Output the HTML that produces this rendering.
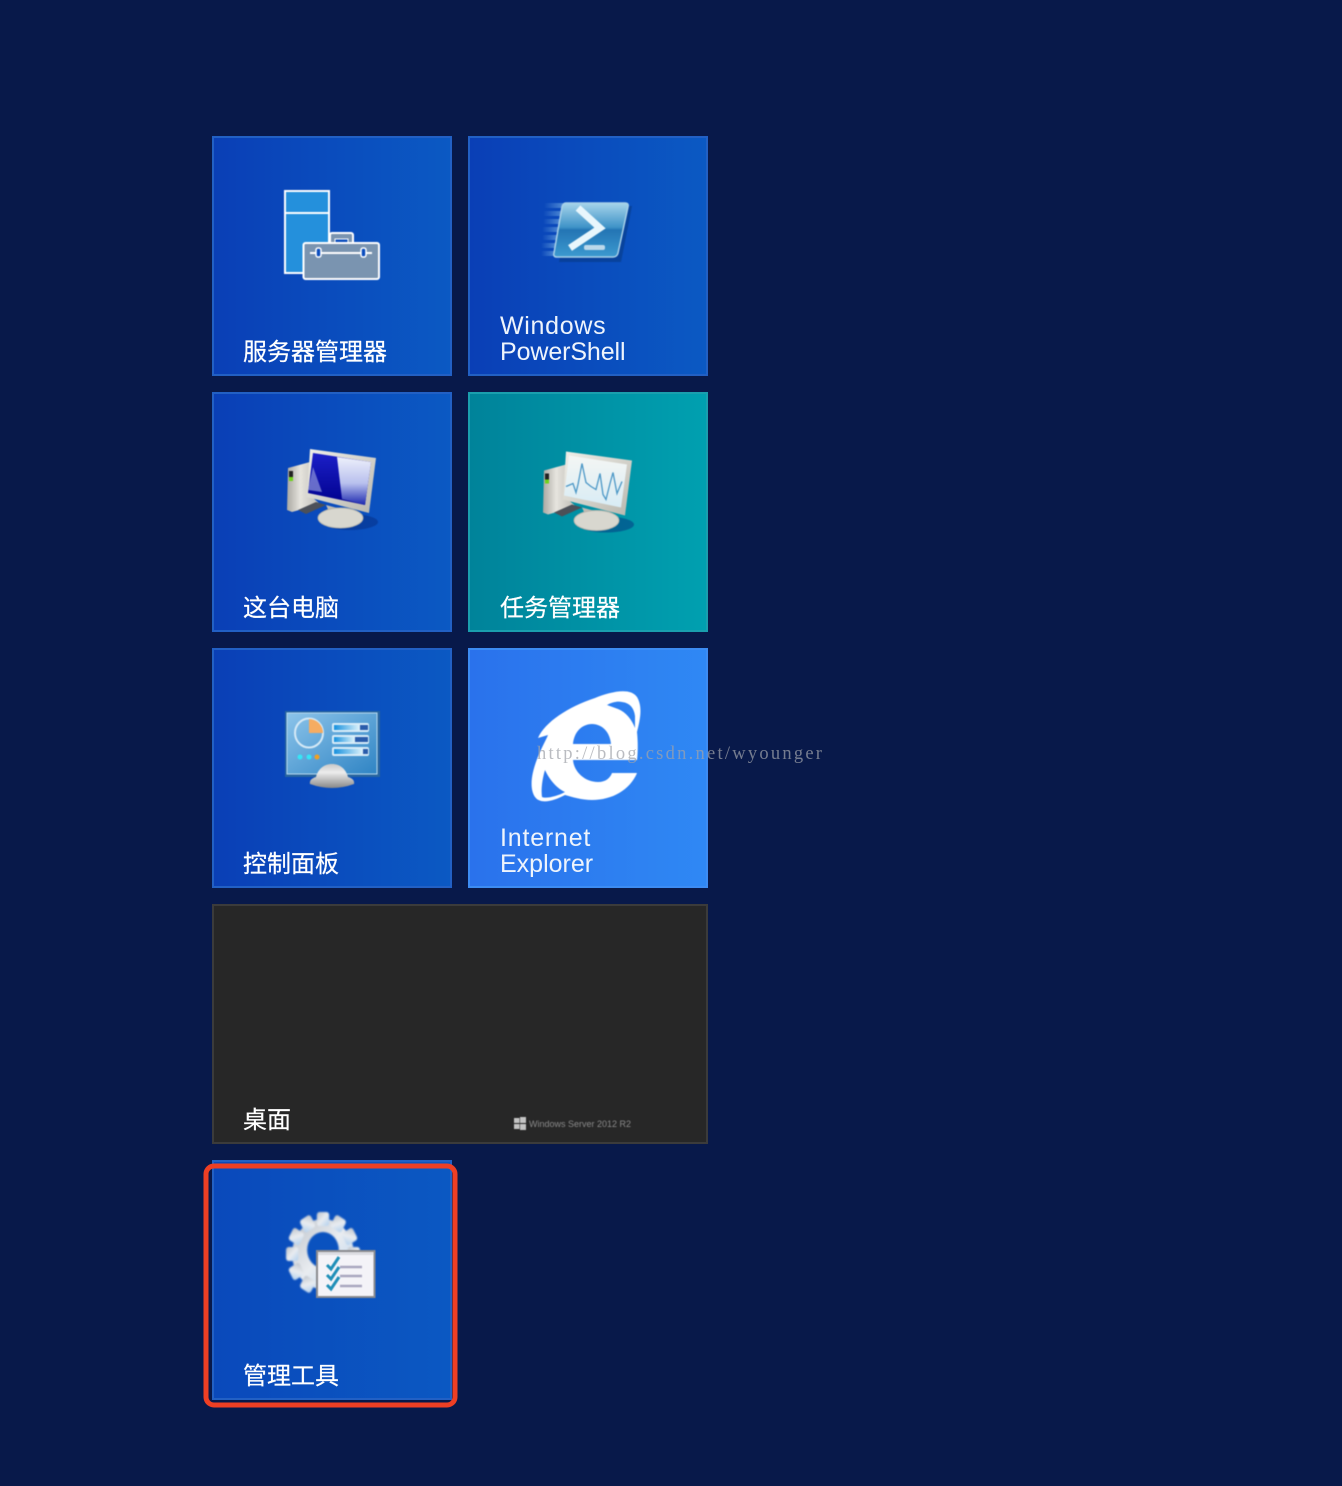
<!DOCTYPE html>
<html>
<head>
<meta charset="utf-8">
<style>
html,body{margin:0;padding:0;background:#08194a;width:1342px;height:1486px;overflow:hidden}
.t{position:absolute;box-sizing:border-box;border:2px solid;width:240px;height:240px}
.b{background:linear-gradient(90deg,#0a3fb6 0%,#0a4cbd 50%,#0b59c3 100%);border-color:#2260c4}
.l{position:absolute;color:#fff;font:24px/26px "Liberation Sans","Noto Sans CJK SC",sans-serif;white-space:nowrap;filter:blur(.35px);-webkit-text-stroke:.2px #fff}
.e{font-size:25px;color:#eef4fc;-webkit-text-stroke:0}
svg{position:absolute;left:0;top:0}
.i{filter:blur(.6px)}
</style>
</head>
<body>
<div class="t b" style="left:212px;top:136px"></div>
<div class="t b" style="left:468px;top:136px"></div>
<div class="t b" style="left:212px;top:392px"></div>
<div class="t" style="left:468px;top:392px;background:linear-gradient(90deg,#00839a,#00a0b0);border-color:#1a9fae"></div>
<div class="t b" style="left:212px;top:648px"></div>
<div class="t" style="left:468px;top:648px;background:linear-gradient(90deg,#2a72ec,#2f88f4);border-color:#3d8cf2"></div>
<div class="t" style="left:212px;top:904px;width:496px;background:#272727;border-color:#3b3b3b"></div>
<div class="t" style="left:212px;top:1160px;background:linear-gradient(90deg,#0a49bb,#0b58c2);border-color:#2260c4"></div>

<svg class="i" width="1342" height="1486" viewBox="0 0 1342 1486">
<defs>
<linearGradient id="ps" x1="0" y1="0" x2="0" y2="1"><stop offset="0" stop-color="#a6d4ea"/><stop offset=".45" stop-color="#3f93c8"/><stop offset=".5" stop-color="#2475b4"/><stop offset="1" stop-color="#3c9ad0"/></linearGradient>
<linearGradient id="sp" x1="0" y1="0" x2="1" y2="0"><stop offset="0" stop-color="#6fa8e0" stop-opacity="0"/><stop offset="1" stop-color="#6fa8e0" stop-opacity=".65"/></linearGradient>
<linearGradient id="scr" x1="0" y1="0" x2="0" y2="1"><stop offset="0" stop-color="#1c20c8"/><stop offset="1" stop-color="#00008c"/></linearGradient>
<linearGradient id="gl" x1="0" y1="0" x2="0" y2="1"><stop offset="0" stop-color="#eef0fb"/><stop offset=".55" stop-color="#b8c0ee"/><stop offset="1" stop-color="#1c28b0"/></linearGradient>
<linearGradient id="mon" x1="0" y1="0" x2="1" y2="1"><stop offset="0" stop-color="#f0efe9"/><stop offset="1" stop-color="#b9b7ae"/></linearGradient>
<linearGradient id="tw" x1="0" y1="0" x2="1" y2="0"><stop offset="0" stop-color="#aaa8a2"/><stop offset=".4" stop-color="#e6e4de"/><stop offset="1" stop-color="#bdbbb4"/></linearGradient>
<linearGradient id="tg" x1="0" y1="0" x2="0" y2="1"><stop offset="0" stop-color="#f4f6f4"/><stop offset="1" stop-color="#d8ecf5"/></linearGradient>
<linearGradient id="pan" x1="0" y1="0" x2="1" y2="1"><stop offset="0" stop-color="#8cc4ea"/><stop offset="1" stop-color="#2f84c4"/></linearGradient>
<linearGradient id="dome" x1="0" y1="0" x2="0" y2="1"><stop offset="0" stop-color="#c8c8c8"/><stop offset=".35" stop-color="#ededed"/><stop offset="1" stop-color="#888"/></linearGradient>
<linearGradient id="gear" x1="0" y1="0" x2="1" y2="1"><stop offset="0" stop-color="#bcc2ca"/><stop offset=".5" stop-color="#e9ecf0"/><stop offset="1" stop-color="#b0cfee"/></linearGradient>
<linearGradient id="bar" x1="0" y1="0" x2="1" y2="0"><stop offset="0" stop-color="#1590de"/><stop offset="1" stop-color="#d8f0fa"/></linearGradient>
<g id="pc">
<ellipse cx="350" cy="522" rx="28" ry="8" fill="#04287a" opacity=".45"/>
<polygon points="288,468 310,462 312,497 320,504 292,512 287,510" fill="url(#tw)"/>
<rect x="289" y="471" width="4" height="7" fill="#222"/><rect x="289" y="477" width="4" height="4" fill="#6fd21c"/>
<polygon points="298,510 316,502 326,505 306,514" fill="#4c5058"/>
<polygon points="326,505 352,512 352,520 330,514" fill="#bdbbb4"/>
<ellipse cx="340.500" cy="518" rx="22.500" ry="10" fill="#d8d7cf" stroke="#b6b5ad"/>
<polygon points="310,449 376,458 369,513 307,497" fill="url(#mon)"/>
</g>
</defs>

<!-- server manager -->
<rect x="285" y="191" width="44" height="82" fill="#2490dc" stroke="#fff" stroke-width="2"/>
<line x1="285" y1="213" x2="329" y2="213" stroke="#fff" stroke-width="2"/>
<rect x="330" y="233" width="23" height="14" rx="2" fill="#7a94b0" stroke="#fff" stroke-width="2"/>
<rect x="335" y="239" width="13" height="5" fill="#0a4cbd" stroke="#fff"/>
<rect x="303.500" y="243" width="75.500" height="36" rx="2" fill="#7a94b0" stroke="#fff" stroke-width="2"/>
<line x1="310" y1="253" x2="372" y2="253" stroke="#fff" stroke-width="2"/>
<rect x="316" y="248" width="5" height="9" rx="2" fill="#0a4cbd" stroke="#fff" stroke-width="1.500"/>
<rect x="361" y="248" width="5" height="9" rx="2" fill="#0a4cbd" stroke="#fff" stroke-width="1.500"/>

<!-- powershell -->
<g fill="url(#sp)"><rect x="544" y="203" width="19" height="5"/><rect x="543" y="211" width="19" height="5"/><rect x="543" y="219" width="17" height="5"/><rect x="542" y="227" width="17" height="5"/><rect x="542" y="235" width="16" height="5"/><rect x="541" y="243" width="15" height="5"/><rect x="541" y="251" width="14" height="5"/></g>
<polygon points="570,206 632,206 621,262 559,262" fill="#063a86" opacity=".6"/>
<path d="M566 203H625q4 0 3 4L618 253q-1 4-5 4H557q-4 0-3-4L562 207q1-4 4-4z" fill="url(#ps)" stroke="#a8d0e8" stroke-width="1.500"/>
<path d="M578 208L600 228L570 248" fill="none" stroke="#e8f6fc" stroke-width="7"/>
<rect x="584" y="245" width="21" height="5" rx="2" fill="#bcd8ea"/>

<!-- this pc -->
<use href="#pc"/>
<polygon points="313,453 371,462 365,505 308,493" fill="url(#scr)"/>
<polygon points="337,457 371,462 365,505 342,499" fill="url(#gl)"/>
<polygon points="313,467 322,492 308,490" fill="#8f96dc" opacity=".7"/>

<!-- task manager -->
<g transform="translate(256,2.500)"><use href="#pc"/>
<polygon points="313,453 371,462 365,505 308,493" fill="url(#tg)"/>
<path d="M310 484L317 481L320 490L322 482L326 461L330 480L335 484L340 487L344 471L347 492L350 497L354 481L357 470L361 491L366 479" fill="none" stroke="#4b97c6" stroke-width="1.300"/></g>

<!-- control panel -->
<rect x="285" y="711" width="95" height="66" fill="#29669f"/>
<rect x="287" y="713" width="90" height="61" fill="url(#pan)" stroke="#b6d8ee"/>
<ellipse cx="309" cy="733" rx="14" ry="14.500" fill="none" stroke="#d5e9f6" stroke-width="2"/>
<path d="M309 719A14 14 0 0 1 323 733H309Z" fill="#f5ac62"/>
<g fill="#d8ecf8"><rect x="332" y="723" width="37" height="9" rx="2"/><rect x="332" y="735" width="37" height="9" rx="2"/><rect x="332" y="747" width="37" height="9" rx="2"/></g>
<rect x="334" y="725" width="25" height="5" fill="url(#bar)"/><rect x="360" y="725" width="8" height="5" fill="#2a5cab"/>
<rect x="334" y="737" width="20" height="5" fill="url(#bar)"/><rect x="355" y="737" width="13" height="5" fill="#2a5cab"/>
<rect x="334" y="749" width="28" height="5" fill="url(#bar)"/><rect x="363" y="749" width="5" height="5" fill="#2a5cab"/>
<circle cx="300" cy="757" r="2.500" fill="#35e6f6"/><circle cx="309" cy="757" r="2.500" fill="#35e6f6"/><circle cx="317" cy="757" r="2.500" fill="#f0a020"/>
<path d="M310 784Q309 779 316 777C318 769 324 764 332 764C340 764 346 769 348 777Q355 779 354 784Q332 792 310 784Z" fill="url(#dome)"/>

<!-- IE -->
<path fill="#fff" fill-rule="evenodd" d="M538 738C545 722 568 707 595 698C610 692 630 687 637 697C643 707 640 720 637 732C638 742 638 752 637 760H573C574 772 585 782 598 782C606 782 610 778 612 773H637C630 790 612 800 592 800C582 800 572 797 565 795C552 802 540 804 535 797C529 788 531 772 540 752C543 745 546 740 548 735ZM573 744H611C610 732 602 724 592 724C582 724 574 732 573 744ZM607 705C612 702 618 701 622 702C630 703 634 708 635 716C635 720 635 724 635 728C632 720 626 712 618 709ZM545 770C542 780 541 790 542 797C546 799 558 796 565 792C558 789 550 781 545 770Z"/>

<!-- admin tools -->
<g style="filter:blur(.8px)" transform="translate(323,1254) scale(.88,1)">
<g fill="url(#gear)"><circle r="35"/>
<g><rect x="-7" y="-42" width="14" height="14" rx="3"/><rect x="-7" y="28" width="14" height="14" rx="3"/><rect x="-42" y="-7" width="14" height="14" rx="3"/><rect x="28" y="-7" width="14" height="14" rx="3"/></g>
<g transform="rotate(30)"><rect x="-7" y="-42" width="14" height="14" rx="3"/><rect x="-7" y="28" width="14" height="14" rx="3"/><rect x="-42" y="-7" width="14" height="14" rx="3"/><rect x="28" y="-7" width="14" height="14" rx="3"/></g>
<g transform="rotate(60)"><rect x="-7" y="-42" width="14" height="14" rx="3"/><rect x="-7" y="28" width="14" height="14" rx="3"/><rect x="-42" y="-7" width="14" height="14" rx="3"/><rect x="28" y="-7" width="14" height="14" rx="3"/></g>
</g>
<circle cx="0" cy="-4" r="18" fill="#0a52bf"/>
</g>
<rect x="317" y="1251" width="57.500" height="46" fill="#f4f3f8" stroke="#8a8a8e" stroke-width="2"/>
<rect x="318" y="1252" width="55" height="3" fill="#dcdce2"/>
<g stroke="#1f8fb8" stroke-width="3" fill="none">
<path d="M327 1265L331 1269L339 1257"/><path d="M327 1275L331 1279L339 1267"/><path d="M327 1285L331 1289L339 1277"/></g>
<g stroke="#a9a6bf" stroke-width="2.500"><line x1="340" y1="1267" x2="362" y2="1267"/><line x1="340" y1="1276" x2="362" y2="1276"/><line x1="340" y1="1286" x2="362" y2="1286"/></g>

<!-- windows server logo -->
<g fill="#c4c4c4"><rect x="514" y="1118" width="5.500" height="5"/><rect x="520" y="1117" width="6" height="6"/><rect x="514" y="1124" width="5.500" height="5"/><rect x="520" y="1124" width="6" height="6"/></g>
</svg>

<svg width="1342" height="1486" viewBox="0 0 1342 1486"><rect x="206" y="1166" width="249" height="239" rx="8" fill="none" stroke="#ee3f24" stroke-width="5"/></svg>

<div class="l" style="left:243px;top:340px">服务器管理器</div>
<div class="l e" style="left:500px;top:313px;letter-spacing:.7px">Windows</div>
<div class="l e" style="left:500px;top:339px;letter-spacing:-.1px">PowerShell</div>
<div class="l" style="left:243px;top:596px">这台电脑</div>
<div class="l" style="left:500px;top:596px">任务管理器</div>
<div class="l" style="left:243px;top:852px">控制面板</div>
<div class="l e" style="left:500px;top:825px;letter-spacing:.8px">Internet</div>
<div class="l e" style="left:500px;top:851px">Explorer</div>
<div class="l" style="left:243px;top:1108px">桌面</div>
<div class="l" style="left:529px;top:1118px;font-size:9px;line-height:12px;color:#8a8a8a;-webkit-text-stroke:0;filter:blur(.5px)">Windows Server 2012 R2</div>
<div class="l" style="left:243px;top:1364px">管理工具</div>
<div class="l" style="left:537px;top:744px;font:18.500px/20px 'Liberation Serif',serif;letter-spacing:2.250px;color:#a0a3aa;opacity:.72;-webkit-text-stroke:0;filter:none">http://blog.csdn.net/wyounger</div>
</body>
</html>
